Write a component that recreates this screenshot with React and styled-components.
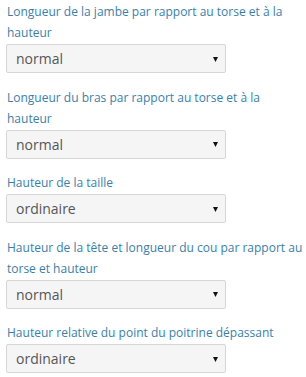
import React from "react";
import styled, { createGlobalStyle } from "styled-components";

const GlobalStyle = createGlobalStyle`
  html, body {
    margin: 0;
    padding: 0;
    background: #ffffff;
    overflow: hidden;
  }
  body {
    font-family: "Open Sans", "Liberation Sans", sans-serif;
  }
`;

const Form = styled.div`
  width: 306px;
  box-sizing: border-box;
  padding: 1px 0 0 7px;
  display: flex;
  flex-direction: column;
`;

const Field = styled.div`
  display: flex;
  flex-direction: column;
  margin-bottom: 13.5px;
`;

const Label = styled.label`
  color: #3a7fa8;
  font-size: 12px;
  line-height: 21px;
  margin-bottom: 1px;
  white-space: pre-line;
`;

const SelectWrap = styled.div`
  position: relative;
  width: 220px;
  margin-left: -1px;
`;

const Select = styled.select`
  appearance: none;
  -webkit-appearance: none;
  width: 100%;
  height: 29px;
  box-sizing: border-box;
  padding: 0 24px 0 9px;
  border: 1px solid #d6d6d6;
  border-radius: 2px;
  background: #f5f5f5;
  color: #555555;
  font-family: "Open Sans", "Liberation Sans", sans-serif;
  font-size: 14px;
  outline: none;
`;

const Arrow = styled.svg`
  position: absolute;
  right: 8px;
  top: 50%;
  margin-top: -2px;
  width: 5px;
  height: 5px;
  pointer-events: none;
`;

const fields = [
  {
    label: "Longueur de la jambe par rapport au torse et à la\nhauteur",
    value: "normal",
  },
  {
    label: "Longueur du bras par rapport au torse et à la\nhauteur",
    value: "normal",
  },
  { label: "Hauteur de la taille", value: "ordinaire" },
  {
    label: "Hauteur de la tête et longueur du cou par rapport au\ntorse et hauteur",
    value: "normal",
  },
  { label: "Hauteur relative du point du poitrine dépassant", value: "ordinaire" },
];

const App = () => {
  return (
    <>
      <GlobalStyle />
      <Form>
        {fields.map((f, i) => (
          <Field key={i}>
            <Label>{f.label}</Label>
            <SelectWrap>
              <Select defaultValue={f.value}>
                <option value={f.value}>{f.value}</option>
              </Select>
              <Arrow viewBox="0 0 5 5">
                <path d="M0 0 L5 0 L2.5 5 Z" fill="#111" />
              </Arrow>
            </SelectWrap>
          </Field>
        ))}
      </Form>
    </>
  );
};

export default App;
